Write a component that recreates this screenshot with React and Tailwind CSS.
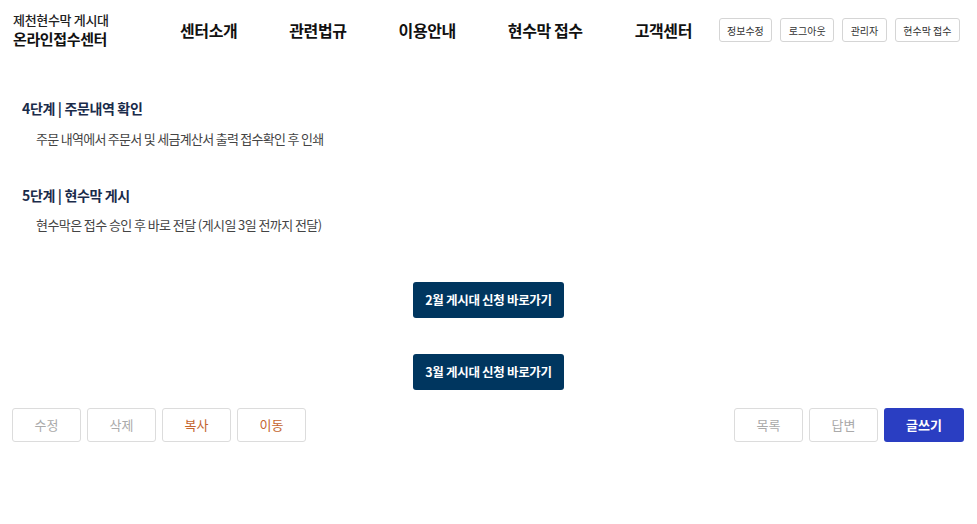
import React from 'react';

function App() {
    const navItems = ['센터소개', '관련법규', '이용안내', '현수막 접수', '고객센터'];
    const topBtns = ['정보수정', '로그아웃', '관리자', '현수막 접수'];

    return (
        <div className="w-[977px] h-[524px] bg-white text-[#222] font-['Noto_Sans_CJK_KR',sans-serif]">
            {/* header */}
            <header className="flex items-center h-[60px] pl-[13px] pr-[17px]">
                <div className="w-[167px] flex flex-col">
                    <span className="text-[13px] leading-[18px] font-medium tracking-tight text-[#222]">제천현수막 게시대</span>
                    <span className="text-[15px] leading-[20px] font-bold tracking-tight text-[#111]">온라인접수센터</span>
                </div>
                <nav className="flex items-center gap-[52px]">
                    {navItems.map((item) => (
                        <a key={item} className="text-[16px] font-bold tracking-tight text-[#111]">{item}</a>
                    ))}
                </nav>
                <div className="ml-auto flex items-center gap-2">
                    {topBtns.map((b) => (
                        <button key={b} className="h-[24px] px-[7.5px] border border-[#d5d5d5] rounded-[3px] text-[10px] text-[#333] bg-white">
                            {b}
                        </button>
                    ))}
                </div>
            </header>

            {/* steps */}
            <section className="pl-[22px] pt-[38px]">
                <div>
                    <h3 className="text-[14px] font-bold tracking-tight text-[#1a2b4a] leading-[20px]">4단계 | 주문내역 확인</h3>
                    <p className="pl-[14px] mt-[11px] text-[13px] tracking-[-0.055em] text-[#444] leading-[20px]">
                        주문 내역에서 주문서 및 세금계산서 출력 접수확인 후 인쇄
                    </p>
                </div>
                <div className="mt-[36px]">
                    <h3 className="text-[14px] font-bold tracking-tight text-[#1a2b4a] leading-[20px]">5단계 | 현수막 게시</h3>
                    <p className="pl-[14px] mt-[10px] text-[13px] tracking-[-0.045em] text-[#444] leading-[20px]">
                        현수막은 접수 승인 후 바로 전달 (게시일 3일 전까지 전달)
                    </p>
                </div>
            </section>

            {/* links */}
            <div className="flex flex-col items-center gap-[36px] mt-[47px]">
                <button className="h-[36px] w-[151px] bg-[#00365f] rounded-[3px] text-white text-[12.5px] font-bold tracking-tight">
                    2월 게시대 신청 바로가기
                </button>
                <button className="h-[36px] w-[151px] bg-[#00365f] rounded-[3px] text-white text-[12.5px] font-bold tracking-tight">
                    3월 게시대 신청 바로가기
                </button>
            </div>

            {/* board buttons */}
            <div className="flex items-center justify-between pl-[12px] pr-[13px] mt-[18px]">
                <div className="flex gap-[6px]">
                    <button className="w-[69px] h-[34px] border border-[#dcdcdc] rounded-[3px] text-[13px] text-[#aaa]">수정</button>
                    <button className="w-[69px] h-[34px] border border-[#dcdcdc] rounded-[3px] text-[13px] text-[#aaa]">삭제</button>
                    <button className="w-[69px] h-[34px] border border-[#dcdcdc] rounded-[3px] text-[13px] text-[#c4652e]">복사</button>
                    <button className="w-[69px] h-[34px] border border-[#dcdcdc] rounded-[3px] text-[13px] text-[#c4652e]">이동</button>
                </div>
                <div className="flex gap-[6px]">
                    <button className="w-[69px] h-[34px] border border-[#dcdcdc] rounded-[3px] text-[13px] text-[#aaa]">목록</button>
                    <button className="w-[69px] h-[34px] border border-[#dcdcdc] rounded-[3px] text-[13px] text-[#aaa]">답변</button>
                    <button className="w-[80px] h-[34px] bg-[#2a3ec2] rounded-[3px] text-[13px] font-bold text-white">글쓰기</button>
                </div>
            </div>
        </div>
    );
}

export default App;
